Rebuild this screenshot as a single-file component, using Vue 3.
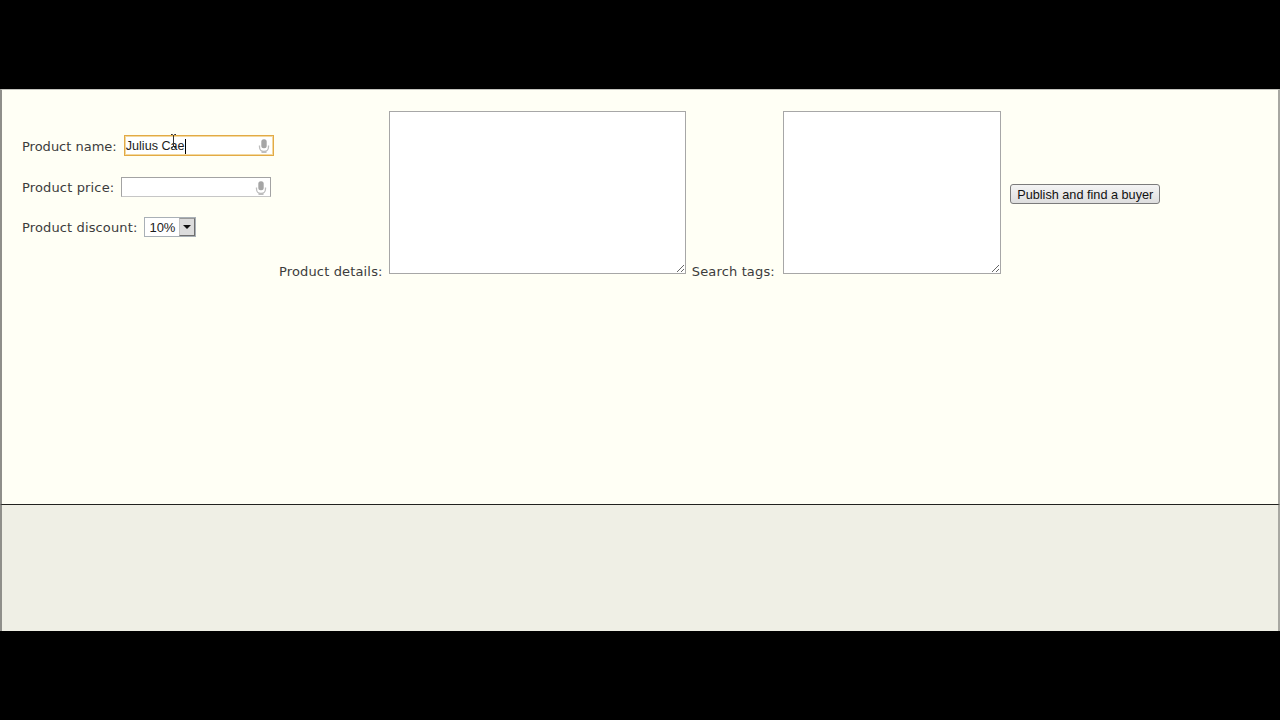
<script setup>
const fields = [
  { label: 'Product details:', width: 295, cls: 'details' },
  { label: 'Search tags:', width: 216, cls: 'tags' },
]
</script>

<template>
  <div class="screen">
    <div class="frame">
      <form class="form" @submit.prevent>
        <div class="left">
          <div class="row row-name">
            <label class="lbl">Product name:</label>
            <div class="input focused">
              <span class="typed">Julius Cae</span><span class="caret"></span>
              <svg class="ibeam" width="7" height="14" viewBox="0 0 7 14"><path d="M1 .5h1.500L3.500 1.500 4.500.5H6M3.500 1.500v11M1 13.500h1.500l1-1 1 1H6" fill="none" stroke="#333" stroke-width="1"/></svg>
              <svg class="mic" width="12" height="14" viewBox="0 0 12 14"><rect x="3.300" y="0.300" width="5.400" height="9" rx="2.500" fill="#a5a5a5"/><path d="M1.500 6.500v1.500a4.500 4.500 0 0 0 9 0V6.500M6 12v2M3.500 13.500h5" fill="none" stroke="#bdbdbd" stroke-width="1.300"/></svg>
            </div>
          </div>
          <div class="row row-price">
            <label class="lbl">Product price:</label>
            <div class="input">
              <svg class="mic" width="12" height="14" viewBox="0 0 12 14"><rect x="3.300" y="0.300" width="5.400" height="9" rx="2.500" fill="#a5a5a5"/><path d="M1.500 6.500v1.500a4.500 4.500 0 0 0 9 0V6.500M6 12v2M3.500 13.500h5" fill="none" stroke="#bdbdbd" stroke-width="1.300"/></svg>
            </div>
          </div>
          <div class="row row-discount">
            <label class="lbl">Product discount:</label>
            <div class="select">
              <span class="sel-value">10%</span>
              <span class="sel-btn"><span class="arrow"></span></span>
            </div>
          </div>
        </div>
        <div v-for="f in fields" :key="f.label" class="area-group" :class="f.cls">
          <label class="lbl">{{ f.label }}</label>
          <textarea class="area" :style="{ width: f.width + 'px' }"></textarea>
        </div>
        <button class="publish" type="button">Publish and find a buyer</button>
      </form>
      <div class="tray"></div>
    </div>
  </div>
</template>

<style>
html, body { margin: 0; background: #000; }
</style>

<style scoped>
.screen {
  width: 1280px;
  height: 720px;
  background: #000;
  padding: 89px 0;
  box-sizing: border-box;
}
.frame {
  height: 542px;
  display: flex;
  flex-direction: column;
  box-sizing: border-box;
  border-left: 2px solid #8f8f8a;
  border-right: 2px solid #a8a8a2;
  border-top: 1px solid #c4c4be;
  background: #fffff5;
}
.form {
  height: 414px;
  box-sizing: border-box;
  display: flex;
  align-items: flex-start;
  padding: 21px 0 0 20px;
  flex: none;
}
.tray {
  flex: 1;
  margin: 0 -2px;
  background: #efefe5;
  border-top: 1px solid #22221f;
  border-left: 2px solid #8f8f8a;
  border-right: 2px solid #a8a8a2;
}
.lbl {
  font-family: "DejaVu Sans", Verdana, sans-serif;
  font-size: 13px;
  line-height: 16px;
  color: #3c3c3c;
  white-space: nowrap;
}
.left {
  width: 257px;
  flex: none;
  padding-top: 24px;
  display: flex;
  flex-direction: column;
}
.row {
  display: flex;
  align-items: center;
}
.row .lbl { margin-top: 2px; }
.row-name { height: 21px; gap: 7px; }
.row-price { height: 20px; gap: 7px; margin-top: 21px; }
.row-price .lbl { letter-spacing: 0.15px; }
.row-discount { height: 20px; gap: 7px; margin-top: 20px; }
.row-discount .lbl { letter-spacing: 0.13px; }
.input {
  position: relative;
  width: 150px;
  height: 20px;
  box-sizing: border-box;
  background: #fff;
  border: 1px solid #a3a3a3;
  border-bottom-color: #c6c6c6;
  display: flex;
  align-items: center;
  padding: 1px 0 0 1px;
  font-family: "Liberation Sans", Arial, sans-serif;
  font-size: 12.600px;
  color: #1c1c1c;
}
.input.focused {
  height: 21px;
  border: 1px solid #e3aa45;
  box-shadow: inset 0 0 0 1px #f3d9a0;
}
.typed { white-space: nowrap; }
.caret {
  display: inline-block;
  width: 1px;
  height: 15px;
  background: #000;
}
.ibeam {
  position: absolute;
  left: 45px;
  top: -2px;
}
.mic {
  position: absolute;
  right: 3px;
  top: 3px;
}
.select {
  display: flex;
  width: 52px;
  height: 20px;
  box-sizing: border-box;
  border: 1px solid #a9b0b6;
  background: #fff;
  font-family: "Liberation Sans", Arial, sans-serif;
  font-size: 13px;
  color: #1c1c1c;
}
.sel-value {
  flex: 1;
  padding: 1px 0 0 4px;
  line-height: 18px;
}
.sel-btn {
  width: 16px;
  flex: none;
  display: flex;
  align-items: center;
  justify-content: center;
  background: #dcdcdc;
  border: 1px solid #6f6f6f;
  border-top-color: #9a9a9a;
  border-left-color: #c4c4c4;
  box-sizing: border-box;
}
.arrow {
  width: 0;
  height: 0;
  border-left: 4px solid transparent;
  border-right: 4px solid transparent;
  border-top: 4px solid #111;
}
.area-group {
  display: flex;
  align-items: flex-end;
  margin-right: 6px;
}
.area-group.details { gap: 6.200px; }
.area-group.tags { gap: 8.400px; }
.area-group .lbl {
  letter-spacing: 0.15px;
  margin-bottom: -6px;
}
.area {
  display: block;
  height: 161px;
  box-sizing: content-box;
  padding: 0;
  margin: 0;
  background: #fff;
  border: 1px solid #a7a7a7;
  outline: none;
}
.publish {
  margin: 73px 0 0 3px;
  width: 150px;
  height: 20px;
  box-sizing: border-box;
  padding: 1px 0 0;
  border: 1px solid #7b7b7b;
  border-radius: 3px;
  background: linear-gradient(#f4f4f4, #dedede);
  font-family: "Liberation Sans", Arial, sans-serif;
  font-size: 12.700px;
  color: #111;
  white-space: nowrap;
}
</style>
